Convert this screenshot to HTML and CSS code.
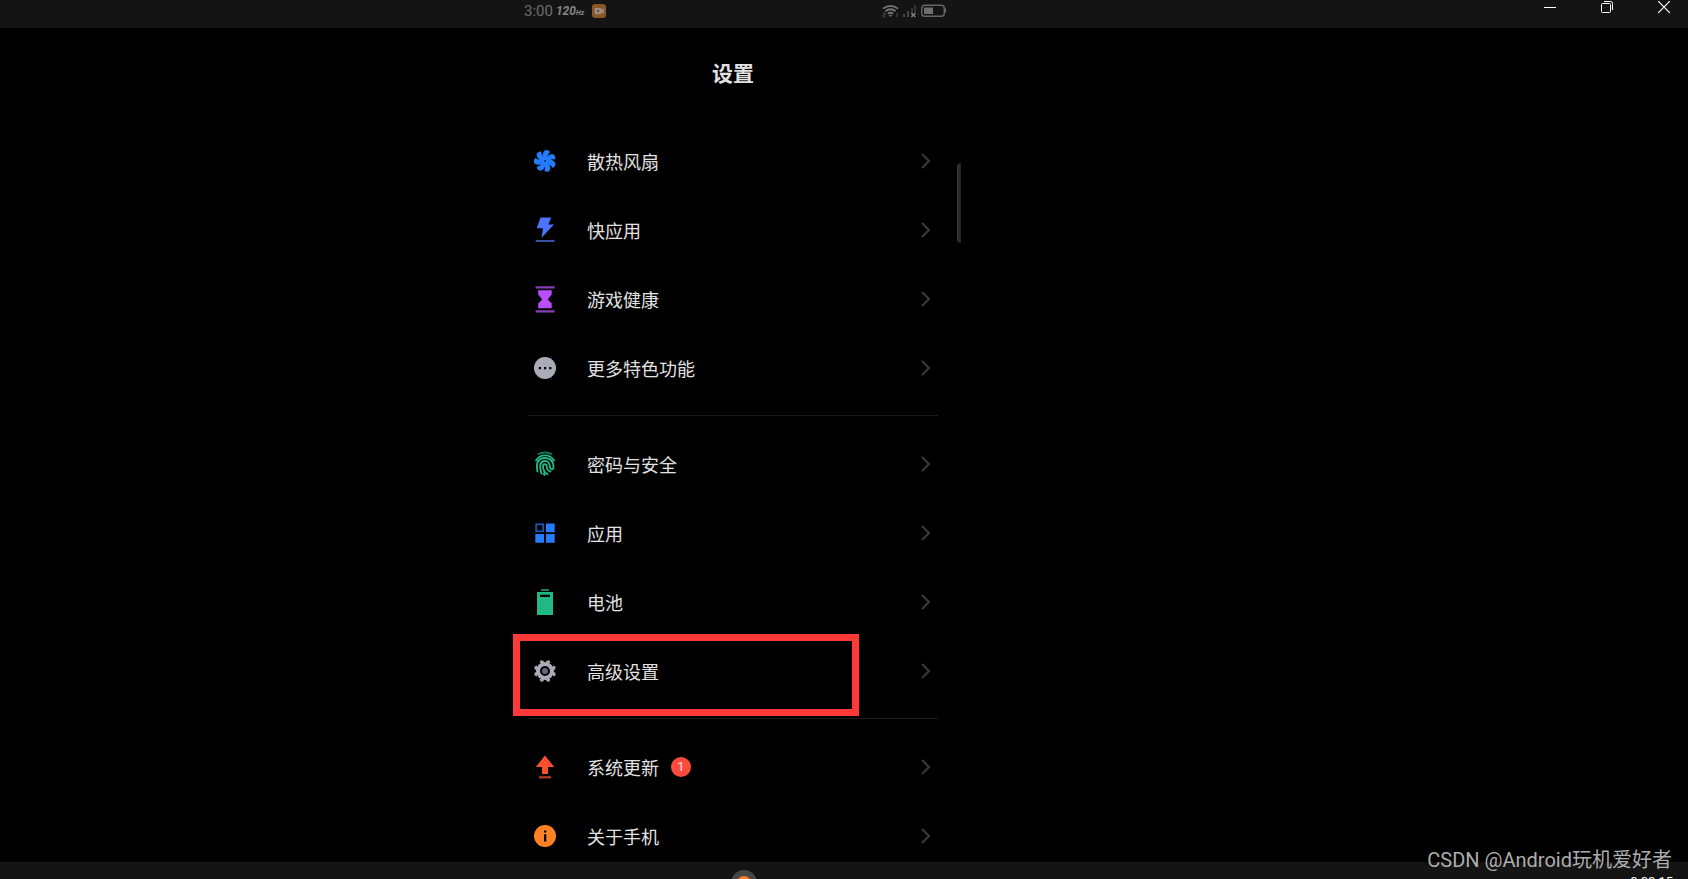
FILE: index.html
```html
<!DOCTYPE html>
<html lang="zh-CN">
<head>
<meta charset="utf-8">
<title>设置</title>
<link rel="stylesheet" href="styles.css">
</head>
<body>
<header class="titlebar">
  <div class="status">
    <div class="status-side">
      <span class="clock">3:00</span>
      <span class="rate">120<small class="unit">Hz</small></span>
      <svg class="rec" width="14" height="14" viewBox="0 0 14 14"><rect width="14" height="14" rx="3" fill="#8a5527"/><path d="M2.700 4h6.300v1.600l2.600-1v5l-2.600-1v1.600H2.700z" fill="#989087"/><path d="M5 6h2.200v2H5z" fill="#7a4a22"/></svg>
    </div>
    <svg class="signals" width="64" height="14" viewBox="0 0 64 14" fill="none">
      <g stroke="#747474" stroke-width="1.8"><path d="M1 4.600Q8.500-1 16 4.600M3.500 7.200Q8.500 3.200 13.500 7.200M6 9.700Q8.500 7.700 11 9.700"/></g>
      <path d="M8.500 13L6.700 11h3.600z" fill="#747474"/>
      <path d="M1 9h2v2H1v2h2M15 9v4" stroke="#484848"/>
      <path d="M21 10h2v3h-2zM25 7h2v6h-2z" fill="#484848"/><path d="M29 4h2v9h-2zM32 1h2v7h-2z" fill="#333"/>
      <path d="M29.500 9l4 4M33.500 9l-4 4" stroke="#858585" stroke-width="1.300"/>
      <rect x="39.700" y="1.200" width="22.600" height="11" rx="3" stroke="#666" stroke-width="1.400"/><path d="M63.500 4.500v4" stroke="#666"/>
      <rect x="42" y="3.500" width="9" height="6.500" fill="#6e6e6e"/>
    </svg>
  </div>
  <div class="window-buttons">
    <button class="win" aria-label="最小化"><svg width="12" height="12" viewBox="0 0 12 12"><path d="M0 6.500h12" stroke="#fff"/></svg></button>
    <button class="win" aria-label="还原"><svg width="12" height="12" viewBox="0 0 12 12" fill="none" stroke="#fff"><rect x=".5" y="2.500" width="9" height="9" rx="1"/><path d="M3 .5h6.500a2 2 0 0 1 2 2V9"/></svg></button>
    <button class="win" aria-label="关闭"><svg width="12" height="12" viewBox="0 0 12 12"><path d="M0 0l12 12M12 0L0 12" stroke="#fff" stroke-width="1.200"/></svg></button>
  </div>
</header>

<main class="screen">
  <div class="settings">
    <h1 class="title">设置</h1>
    <nav class="list">
      <a class="row" href="#fan">
        <svg class="icon" viewBox="0 0 24 24" fill="#247dff"><defs><path id="blade" d="M11.500 12C8.700 8.500 8.900 4 12 1.200C14 .7 16.400 1.600 17 3.200C15 4.700 13.600 7.600 13.200 12z"/></defs><use href="#blade"/><use href="#blade" transform="rotate(51.400 12 12)"/><use href="#blade" transform="rotate(102.900 12 12)"/><use href="#blade" transform="rotate(154.300 12 12)"/><use href="#blade" transform="rotate(205.700 12 12)"/><use href="#blade" transform="rotate(257.100 12 12)"/><use href="#blade" transform="rotate(308.600 12 12)"/><circle cx="12" cy="12" r="1" fill="#0a2f66"/></svg>
        <span class="label">散热风扇</span><svg class="chevron" viewBox="0 0 10 16"><path d="M1 1l7 7-7 7"/></svg>
      </a>
      <a class="row" href="#quick">
        <svg class="icon" viewBox="0 0 24 24"><path d="M7.500-.5h10.700L15.300 6.500H21L8.500 19.800L10 10.200H3.800z" fill="#4d73ff"/><path d="M2.700 23h18.800" stroke="#415bb5" stroke-width="1.800"/></svg>
        <span class="label">快应用</span><svg class="chevron" viewBox="0 0 10 16"><path d="M1 1l7 7-7 7"/></svg>
      </a>
      <a class="row" href="#health">
        <svg class="icon" viewBox="0 0 24 24"><path d="M5.200 3.300h13.500v4.300L14.700 12.500l4 4v4.800H5.200v-4.800l4-4-4-4.900z" fill="#b94dff"/><path d="M2.600 .3h19M2.600 24.400h19" stroke="#853cb5" stroke-width="2.200"/></svg>
        <span class="label">游戏健康</span><svg class="chevron" viewBox="0 0 10 16"><path d="M1 1l7 7-7 7"/></svg>
      </a>
      <a class="row" href="#more">
        <svg class="icon" viewBox="0 0 24 24"><circle cx="12" cy="12" r="11" fill="#a9acb8"/><path d="M5.800 11h2.200v2.200H5.800zM11 11h2.200v2.200H11zM16.200 11h2.200v2.200h-2.200z" fill="#000"/></svg>
        <span class="label">更多特色功能</span><svg class="chevron" viewBox="0 0 10 16"><path d="M1 1l7 7-7 7"/></svg>
      </a>
      <hr class="divider">
      <a class="row" href="#security">
        <svg class="icon" viewBox="0 0 24 24" fill="none" stroke="#1fb886" stroke-width="1.900" stroke-linecap="round"><path d="M5.500 2Q12-1.300 18.500 2" stroke="#17805f"/><path d="M3 8.500C7 1.700 17 1.700 21 8.500M4.500 19.500C2.700 11 5 6 12 6C18.500 6 20.500 10 20.500 15.500C20.500 17.500 17.500 18 17 15.500C16.500 10 15 9 12 9C7 9 6 13.500 8.500 21.500M17.500 19.500C14.500 19 14 17 13.700 14.500C13.500 11.500 10 11.500 10 14.500C10.200 18.500 11.500 20.500 14.500 22.300M11.500 23L10.800 21.500"/></svg>
        <span class="label">密码与安全</span><svg class="chevron" viewBox="0 0 10 16"><path d="M1 1l7 7-7 7"/></svg>
      </a>
      <a class="row" href="#apps">
        <svg class="icon" viewBox="0 0 24 24" fill="#247dff"><path d="M13 2.500h8.700v8.700H13zM2.300 13H11v8.700H2.300zM13 13h8.700v8.700H13z"/><rect x="3.200" y="3.300" width="7" height="7" fill="none" stroke="#1c56ab" stroke-width="1.800"/></svg>
        <span class="label">应用</span><svg class="chevron" viewBox="0 0 10 16"><path d="M1 1l7 7-7 7"/></svg>
      </a>
      <a class="row" href="#battery">
        <svg class="icon" viewBox="0 0 24 24"><path d="M8-1h8v2H8z" fill="#178060"/><path d="M4 2h16v23H4z" fill="#1fb886"/><path d="M7 4.700h10V7H7z" fill="#000"/></svg>
        <span class="label">电池</span><svg class="chevron" viewBox="0 0 10 16"><path d="M1 1l7 7-7 7"/></svg>
      </a>
      <a class="row highlighted" href="#advanced">
        <svg class="icon" viewBox="0 0 24 24"><g fill="#a9acb8"><circle cx="12" cy="12" r="9"/><g id="teeth"><path d="M6.600 4L7.700 1.300L10.500 1.800L11 4zM13 4l.5-2.200l2.800-.5L17.400 4z"/></g><use href="#teeth" transform="rotate(90 12 12)"/><use href="#teeth" transform="rotate(180 12 12)"/><use href="#teeth" transform="rotate(270 12 12)"/></g><circle cx="12" cy="12" r="4" fill="#666870" stroke="#000" stroke-width="2"/></svg>
        <span class="label">高级设置</span><svg class="chevron" viewBox="0 0 10 16"><path d="M1 1l7 7-7 7"/></svg>
      </a>
      <hr class="divider">
      <a class="row" href="#update">
        <svg class="icon" viewBox="0 0 24 24"><path d="M12 .5l9.200 11.500H15v7H9v-7H2.800z" fill="#ff502d"/><path d="M6 22.300h12" stroke="#b53e28" stroke-width="2.200"/></svg>
        <span class="label">系统更新</span><span class="badge">1</span><svg class="chevron" viewBox="0 0 10 16"><path d="M1 1l7 7-7 7"/></svg>
      </a>
      <a class="row" href="#about">
        <svg class="icon" viewBox="0 0 24 24"><circle cx="12" cy="12" r="11" fill="#ff8126"/><path d="M11 6.500h2.300v2H11zM11 10.300h2.300v7.200H11z" fill="#000"/></svg>
        <span class="label">关于手机</span><svg class="chevron" viewBox="0 0 10 16"><path d="M1 1l7 7-7 7"/></svg>
      </a>
    </nav>
  </div>
  <div class="scrollbar"></div>
</main>

<footer class="bottombar">
  <svg class="dock" width="26" height="9" viewBox="0 0 26 9"><circle cx="13" cy="13" r="13" fill="#474747"/><circle cx="13" cy="13" r="7" fill="#ff8126"/></svg>
  <span class="timer">0:00:15</span>
</footer>
<div class="watermark">CSDN @Android玩机爱好者</div>
</body>
</html>
```
FILE: styles.css
```css
* { box-sizing: border-box; }

body {
  margin: 0;
  height: 100vh;
  display: flex;
  flex-direction: column;
  overflow: hidden;
  background: #000;
  color: #e2e2e2;
  font-family: Roboto, "Noto Sans CJK SC", sans-serif;
}

.titlebar,
.screen {
  display: grid;
  grid-template-columns: 528fr 410fr 750fr;
}

.titlebar {
  flex: none;
  height: 28px;
  background: #141414;
}

.status {
  grid-column: 2;
  display: flex;
  justify-content: space-between;
  height: 22px;
  align-items: center;
  margin: 0 -8px 0 -4px;
}

.status-side {
  display: flex;
  align-items: center;
  gap: 3px;
  color: #6e6e6e;
}

.clock { font-size: 15px; }

.rate {
  font-size: 12px;
  font-weight: 700;
  font-style: italic;
  color: #858585;
}

.unit { font-size: 7px; }

.rec { margin-left: 5px; }

.window-buttons {
  display: flex;
  justify-content: flex-end;
  padding-right: 18px;
  gap: 45px;
}

.win {
  width: 12px;
  height: 14px;
  padding: 1px 0;
  border: 0;
  background: none;
}

.win svg { display: block; }

.screen {
  flex: 1;
  min-height: 0;
  overflow: hidden;
}

.settings { grid-column: 2; }

.title {
  margin: 0;
  padding-top: 31px;
  height: 98px;
  font-size: 21px;
  line-height: 30px;
  font-weight: 700;
  text-align: center;
}

.row {
  position: relative;
  display: flex;
  align-items: center;
  height: 69px;
  padding: 0 7px 0 5px;
  color: inherit;
  text-decoration: none;
}

.icon {
  flex: none;
  width: 24px;
  height: 24px;
  margin-right: 30px;
  overflow: visible;
}

.label {
  padding-top: 4px;
  font-size: 18px;
  line-height: 24px;
}

.chevron {
  width: 10px;
  height: 16px;
  margin-left: auto;
  fill: none;
  stroke: #3a3a40;
  stroke-width: 2;
}

.divider {
  height: 1px;
  margin: 13px 0;
  border: 0;
  background: #1a1a1a;
}

.badge {
  width: 20px;
  height: 20px;
  margin-left: 12px;
  border-radius: 50%;
  background: #ff4b3e;
  font-size: 13px;
  line-height: 20px;
  text-align: center;
}

.highlighted::after {
  content: "";
  position: absolute;
  top: -2px;
  bottom: -11px;
  left: -15px;
  right: 79px;
  border: 7px solid #ff3838;
}

.scrollbar {
  width: 4px;
  height: 80px;
  margin: 135px 0 0 19px;
  border-radius: 4px 0 0 4px;
  background: linear-gradient(90deg, #383838, #202020);
}

.bottombar {
  display: flex;
  flex: none;
  align-items: flex-end;
  justify-content: space-between;
  height: 17px;
  padding: 0 15px 0 43.300%;
  background: #141414;
  overflow: hidden;
}

.dock { display: block; }

.timer {
  height: 4px;
  color: #fff;
  font-size: 13px;
  line-height: 13px;
}

.watermark {
  position: absolute;
  right: 16px;
  bottom: 6px;
  color: #adadad;
  font-size: 20px;
  line-height: 26px;
}
```
